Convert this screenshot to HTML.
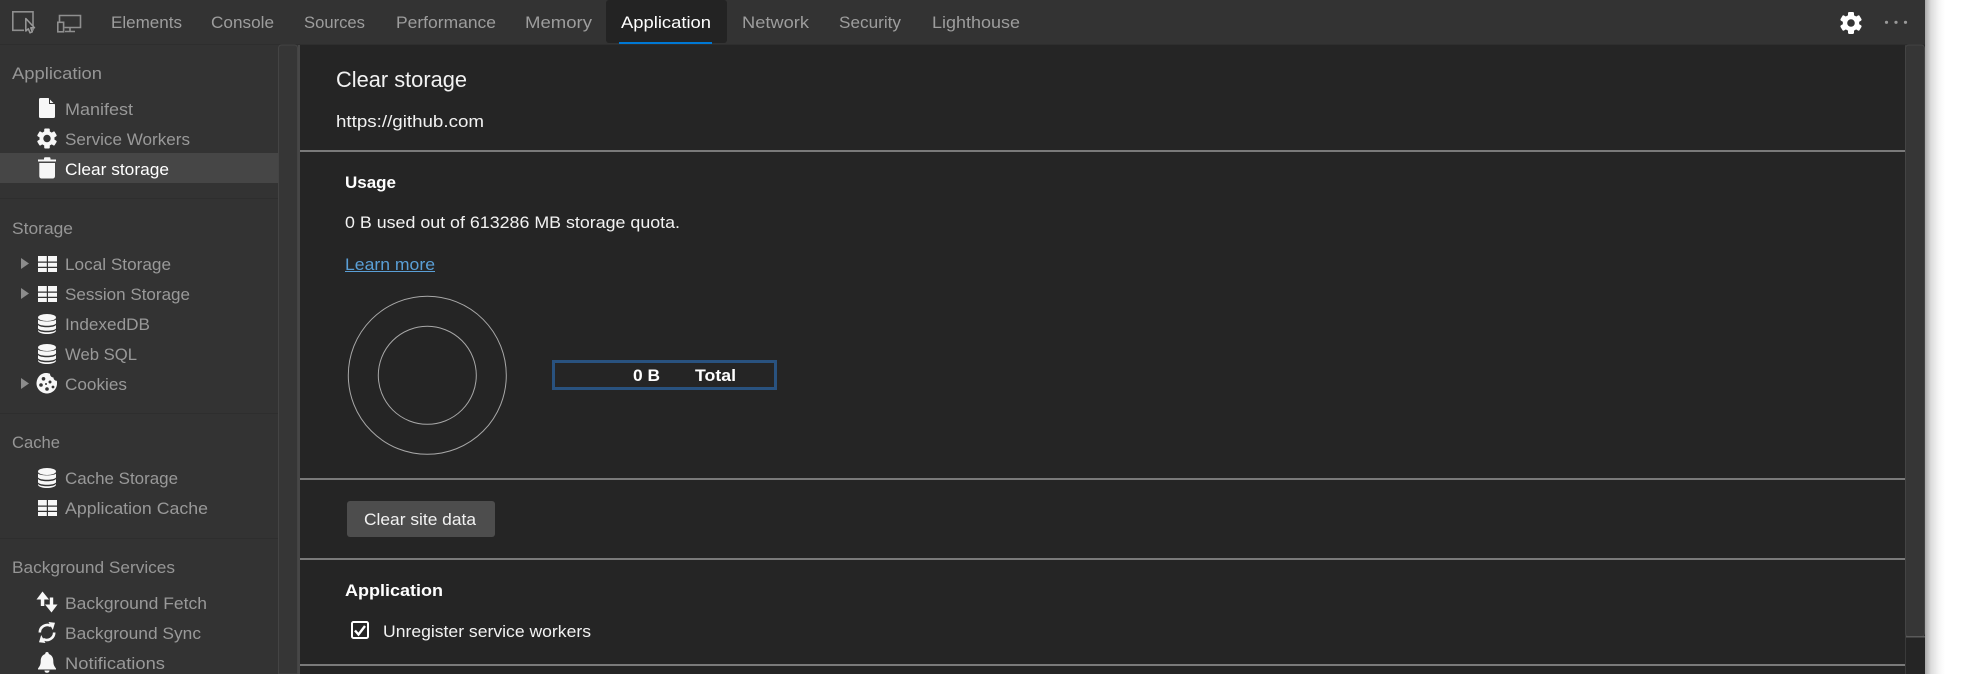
<!DOCTYPE html>
<html lang="en">
<head>
<meta charset="utf-8">
<title>Clear storage</title>
<style>
html,body{margin:0;padding:0;background:#fff;width:1973px;height:674px;overflow:hidden}
svg{display:block}
text{font-family:"Liberation Sans",sans-serif;font-size:17px;dominant-baseline:auto}
.tab{fill:#9d9d9d}
.side{fill:#999}
.head{fill:#969696}
.main{fill:#f2f2f2}
.b{font-weight:700;fill:#fff}
.ic{fill:#f7f7f7}
</style>
</head>
<body>
<svg xmlns="http://www.w3.org/2000/svg" xmlns:xlink="http://www.w3.org/1999/xlink" width="1973" height="674" viewBox="0 0 1973 674">
<defs>
<linearGradient id="sh" x1="0" x2="1" y1="0" y2="0">
<stop offset="0" stop-color="#a8a8a8"/><stop offset=".3" stop-color="#dcdcdc"/><stop offset=".7" stop-color="#f6f6f6"/><stop offset="1" stop-color="#fff"/>
</linearGradient>
<g id="tbl" class="ic">
<path d="M0 0h8.800v5.500H0zM10 0h9v5.500h-9zM0 6.700h8.800v4H0zM10 6.700h9v4h-9zM0 12h8.800v4H0zM10 12h9v4h-9z"/>
</g>
<g id="db" class="ic">
<ellipse cx="9" cy="3.500" rx="9" ry="3.500"/>
<path d="M0 5.500C2 8 16 8 18 5.500V9.500C16 12.500 2 12.500 0 9.500zM0 11C2 14 16 14 18 11V14.500C16 17.500 2 17.500 0 14.500zM0 16C2 19 16 19 18 16V17C16 21 2 21 0 17z"/>
</g>
</defs>

<!-- base panels -->
<rect x="0" y="0" width="1926" height="674" fill="#333"/>
<rect x="1925" y="0" width="20" height="674" fill="url(#sh)"/>
<rect x="1945" y="0" width="28" height="674" fill="#fff"/>
<rect x="0" y="44" width="1925" height="1" fill="#2e2e2e"/>

<!-- toolbar icons -->
<path d="M33 30.500V11.800H12.800V30.300H24" fill="none" stroke="#8f8f8f" stroke-width="1.600"/>
<path d="M25.800 18.500L34.500 27.800H30.800L32.300 31.800L30 32.800L28.300 28.800L25.800 31z" fill="#333" stroke="#9a9a9a" stroke-width="1.500" stroke-linejoin="round"/>
<path d="M59.500 22V15.500H80.500V27.500H64.500M70 27.500V31M65 31.500H75" fill="none" stroke="#8f8f8f" stroke-width="1.600"/>
<rect x="57.800" y="22.300" width="5.800" height="9.500" fill="none" stroke="#8f8f8f" stroke-width="1.600"/>

<!-- tabs -->
<rect x="606" y="0" width="121" height="43" rx="3" fill="#232323"/>
<rect x="619" y="42" width="93" height="2" fill="#0078d4"/>
<text class="tab" x="111" y="28" textLength="71" lengthAdjust="spacingAndGlyphs">Elements</text>
<text class="tab" x="211" y="28" textLength="63" lengthAdjust="spacingAndGlyphs">Console</text>
<text class="tab" x="304" y="28" textLength="61" lengthAdjust="spacingAndGlyphs">Sources</text>
<text class="tab" x="396" y="28" textLength="100" lengthAdjust="spacingAndGlyphs">Performance</text>
<text class="tab" x="525" y="28" textLength="67" lengthAdjust="spacingAndGlyphs">Memory</text>
<text x="621" y="28" fill="#fff" textLength="90" lengthAdjust="spacingAndGlyphs">Application</text>
<text class="tab" x="742" y="28" textLength="67" lengthAdjust="spacingAndGlyphs">Network</text>
<text class="tab" x="839" y="28" textLength="62" lengthAdjust="spacingAndGlyphs">Security</text>
<text class="tab" x="932" y="28" textLength="88" lengthAdjust="spacingAndGlyphs">Lighthouse</text>

<!-- toolbar right -->
<g transform="translate(1851 23)" fill="#fff">
<circle r="8.200"/>
<rect x="-3" y="-11" width="6" height="22" rx="1.200"/>
<rect x="-3" y="-11" width="6" height="22" rx="1.200" transform="rotate(60)"/>
<rect x="-3" y="-11" width="6" height="22" rx="1.200" transform="rotate(120)"/>
<circle r="3.800" fill="#333"/>
</g>
<circle cx="1886.500" cy="22.300" r="1.600" fill="#9a9a9a"/>
<circle cx="1896" cy="22.300" r="1.600" fill="#9a9a9a"/>
<circle cx="1905.500" cy="22.300" r="1.600" fill="#9a9a9a"/>

<!-- sidebar -->
<rect x="0" y="153" width="278" height="30" fill="#464646"/>
<rect x="0" y="198" width="278" height="1" fill="#2e2e2e"/>
<rect x="0" y="413" width="278" height="1" fill="#2e2e2e"/>
<rect x="0" y="538" width="278" height="1" fill="#2e2e2e"/>

<!-- sidebar scrollbar -->
<path d="M278.500 674V48a3 3 0 0 1 3-3h13a3 3 0 0 1 3 3V674z" fill="#363636" stroke="#444" stroke-width="1"/>
<rect x="298" y="45" width="2" height="629" fill="#474747"/>

<!-- sidebar text -->
<text class="head" x="12" y="79" textLength="90" lengthAdjust="spacingAndGlyphs">Application</text>
<text class="side" x="65" y="115" textLength="68" lengthAdjust="spacingAndGlyphs">Manifest</text>
<text class="side" x="65" y="145" textLength="125" lengthAdjust="spacingAndGlyphs">Service Workers</text>
<text x="65" y="175" fill="#fff" textLength="104" lengthAdjust="spacingAndGlyphs">Clear storage</text>
<text class="head" x="12" y="234" textLength="61" lengthAdjust="spacingAndGlyphs">Storage</text>
<text class="side" x="65" y="270" textLength="106" lengthAdjust="spacingAndGlyphs">Local Storage</text>
<text class="side" x="65" y="300" textLength="125" lengthAdjust="spacingAndGlyphs">Session Storage</text>
<text class="side" x="65" y="330" textLength="85" lengthAdjust="spacingAndGlyphs">IndexedDB</text>
<text class="side" x="65" y="360" textLength="72" lengthAdjust="spacingAndGlyphs">Web SQL</text>
<text class="side" x="65" y="390" textLength="62" lengthAdjust="spacingAndGlyphs">Cookies</text>
<text class="head" x="12" y="448" textLength="48" lengthAdjust="spacingAndGlyphs">Cache</text>
<text class="side" x="65" y="484" textLength="113" lengthAdjust="spacingAndGlyphs">Cache Storage</text>
<text class="side" x="65" y="514" textLength="143" lengthAdjust="spacingAndGlyphs">Application Cache</text>
<text class="head" x="12" y="573" textLength="163" lengthAdjust="spacingAndGlyphs">Background Services</text>
<text class="side" x="65" y="609" textLength="142" lengthAdjust="spacingAndGlyphs">Background Fetch</text>
<text class="side" x="65" y="639" textLength="136" lengthAdjust="spacingAndGlyphs">Background Sync</text>
<text class="side" x="65" y="669" textLength="100" lengthAdjust="spacingAndGlyphs">Notifications</text>

<!-- sidebar icons -->
<path class="ic" d="M40.500 98H48.500L55 104.500V116.500A1.500 1.500 0 0 1 53.500 118H40.500A1.500 1.500 0 0 1 39 116.500V99.500A1.500 1.500 0 0 1 40.500 98z"/>
<path d="M49.500 98L49.500 103.500L55 103.500" fill="none" stroke="#333" stroke-width="1"/>
<g transform="translate(47 138.500)" fill="#f7f7f7">
<circle r="7.500"/>
<rect x="-2.800" y="-10" width="5.600" height="20" rx="1"/>
<rect x="-2.800" y="-10" width="5.600" height="20" rx="1" transform="rotate(60)"/>
<rect x="-2.800" y="-10" width="5.600" height="20" rx="1" transform="rotate(120)"/>
<circle r="3.700" fill="#333"/>
</g>
<path class="ic" d="M38 159.500H44V158.500C44 157.500 44.500 157.300 45.500 157.300H49C50 157.300 50.500 157.500 50.500 158.500V159.500H56V161.500H38zM39.300 163H55V176C55 177.500 54 178.500 52.500 178.500H41.800C40.300 178.500 39.300 177.500 39.300 176z"/>

<path d="M21 258L29 263.500L21 269z" fill="#8c8c8c"/>
<path d="M21 288L29 293.500L21 299z" fill="#8c8c8c"/>
<path d="M21 378L29 383.500L21 389z" fill="#8c8c8c"/>
<use xlink:href="#tbl" href="#tbl" x="38" y="256"/>
<use xlink:href="#tbl" href="#tbl" x="38" y="286"/>
<use xlink:href="#tbl" href="#tbl" x="38" y="500"/>
<use xlink:href="#db" href="#db" x="38" y="314"/>
<use xlink:href="#db" href="#db" x="38" y="344"/>
<use xlink:href="#db" href="#db" x="38" y="468"/>

<!-- cookie -->
<path class="ic" d="M46 373C47.500 373 49 373.300 50 373.800C50 376 51.500 377.500 53.500 377.500C53.500 379.500 55 380.800 56.800 380.800C57 381.800 57 382.500 57 383.500C57 389 52.500 393.500 47 393.500C41.500 393.500 36.500 389 36.500 383.500C36.500 378 40.500 373 46 373z"/>
<g fill="#333">
<circle cx="43.500" cy="378.800" r="1.800"/>
<circle cx="50" cy="382" r="1.500"/>
<circle cx="41" cy="385" r="1.800"/>
<circle cx="47" cy="389" r="1.800"/>
<circle cx="53" cy="387" r="1.400"/>
<circle cx="46" cy="384" r="1"/>
</g>

<!-- up/down arrows -->
<path class="ic" d="M42.500 591.500L49 599.500H44.300V606H40.800V599.500H36.500z"/>
<path class="ic" d="M51.500 612.500L45 604.500H49.800V597.500H53.200V604.500H57.500z"/>
<!-- sync -->
<g fill="none" stroke="#f7f7f7" stroke-width="2.600">
<path d="M39.800 632.500A7.500 7.500 0 0 1 51 626"/>
<path d="M54.200 632.500A7.500 7.500 0 0 1 43 639"/>
</g>
<path class="ic" d="M48.500 622L55 622.800L52.800 630zM45.500 643L39 642.200L41.200 635z"/>
<!-- bell -->
<path class="ic" d="M47 652C48.200 652 48.800 652.800 48.800 654C52 655 53.300 658 53.300 661C53.300 665 54.500 666.500 56 668.500V669.500H38V668.500C39.500 666.500 40.700 665 40.700 661C40.700 658 42 655 45.200 654C45.200 652.800 45.800 652 47 652zM44.500 670.500H49.500C49.500 672 48.300 672.800 47 672.800C45.700 672.800 44.500 672 44.500 670.500z"/>

<!-- main -->
<rect x="300" y="45" width="1625" height="629" fill="#252525"/>
<rect x="300" y="150" width="1605" height="2" fill="#7a7a7a"/>
<rect x="300" y="478" width="1605" height="2" fill="#7a7a7a"/>
<rect x="300" y="558" width="1605" height="2" fill="#7a7a7a"/>
<rect x="300" y="664" width="1605" height="2" fill="#7a7a7a"/>

<!-- main scrollbar -->
<rect x="1905" y="45" width="1" height="629" fill="#3a3a3a"/>
<path d="M1905.500 48a3 3 0 0 1 3-3h13a3 3 0 0 1 3 3V633a4 4 0 0 1-4 4h-11a4 4 0 0 1-4-4z" fill="#363636" stroke="#444" stroke-width="1"/>
<rect x="1906" y="636" width="19" height="1.500" fill="#5a5a5a"/>

<text x="336" y="87" font-size="22" style="font-size:22px" fill="#f2f2f2" textLength="131" lengthAdjust="spacingAndGlyphs">Clear storage</text>
<text class="main" x="336" y="127" textLength="148" lengthAdjust="spacingAndGlyphs">https://github.com</text>
<text class="b" x="345" y="188" textLength="51" lengthAdjust="spacingAndGlyphs">Usage</text>
<text class="main" x="345" y="228" textLength="335" lengthAdjust="spacingAndGlyphs">0 B used out of 613286 MB storage quota.</text>
<text x="345" y="270" fill="#5a9fd6" textLength="90" lengthAdjust="spacingAndGlyphs">Learn more</text>
<rect x="345" y="271" width="90" height="1" fill="#5a9fd6"/>

<circle cx="427.300" cy="375.300" r="79" fill="none" stroke="#a8a8a8" stroke-width="1"/>
<circle cx="427.300" cy="375.300" r="49" fill="none" stroke="#a8a8a8" stroke-width="1"/>
<rect x="553.500" y="361.500" width="222" height="27" fill="none" stroke="#29527f" stroke-width="3"/>
<text class="b" x="633" y="381" textLength="27" lengthAdjust="spacingAndGlyphs">0 B</text>
<text class="b" x="695" y="381" textLength="41" lengthAdjust="spacingAndGlyphs">Total</text>

<rect x="347" y="501" width="148" height="36" rx="3" fill="#4d4d4d"/>
<text x="364" y="525" fill="#f2f2f2" textLength="112" lengthAdjust="spacingAndGlyphs">Clear site data</text>

<text class="b" x="345" y="596" textLength="98" lengthAdjust="spacingAndGlyphs">Application</text>
<rect x="352" y="622" width="16" height="16" rx="1.500" fill="none" stroke="#fff" stroke-width="2"/>
<path d="M355 630.500L358.500 634.500L365 626" fill="none" stroke="#fff" stroke-width="2.400"/>
<text class="main" x="383" y="637" textLength="208" lengthAdjust="spacingAndGlyphs">Unregister service workers</text>
</svg>
</body>
</html>
